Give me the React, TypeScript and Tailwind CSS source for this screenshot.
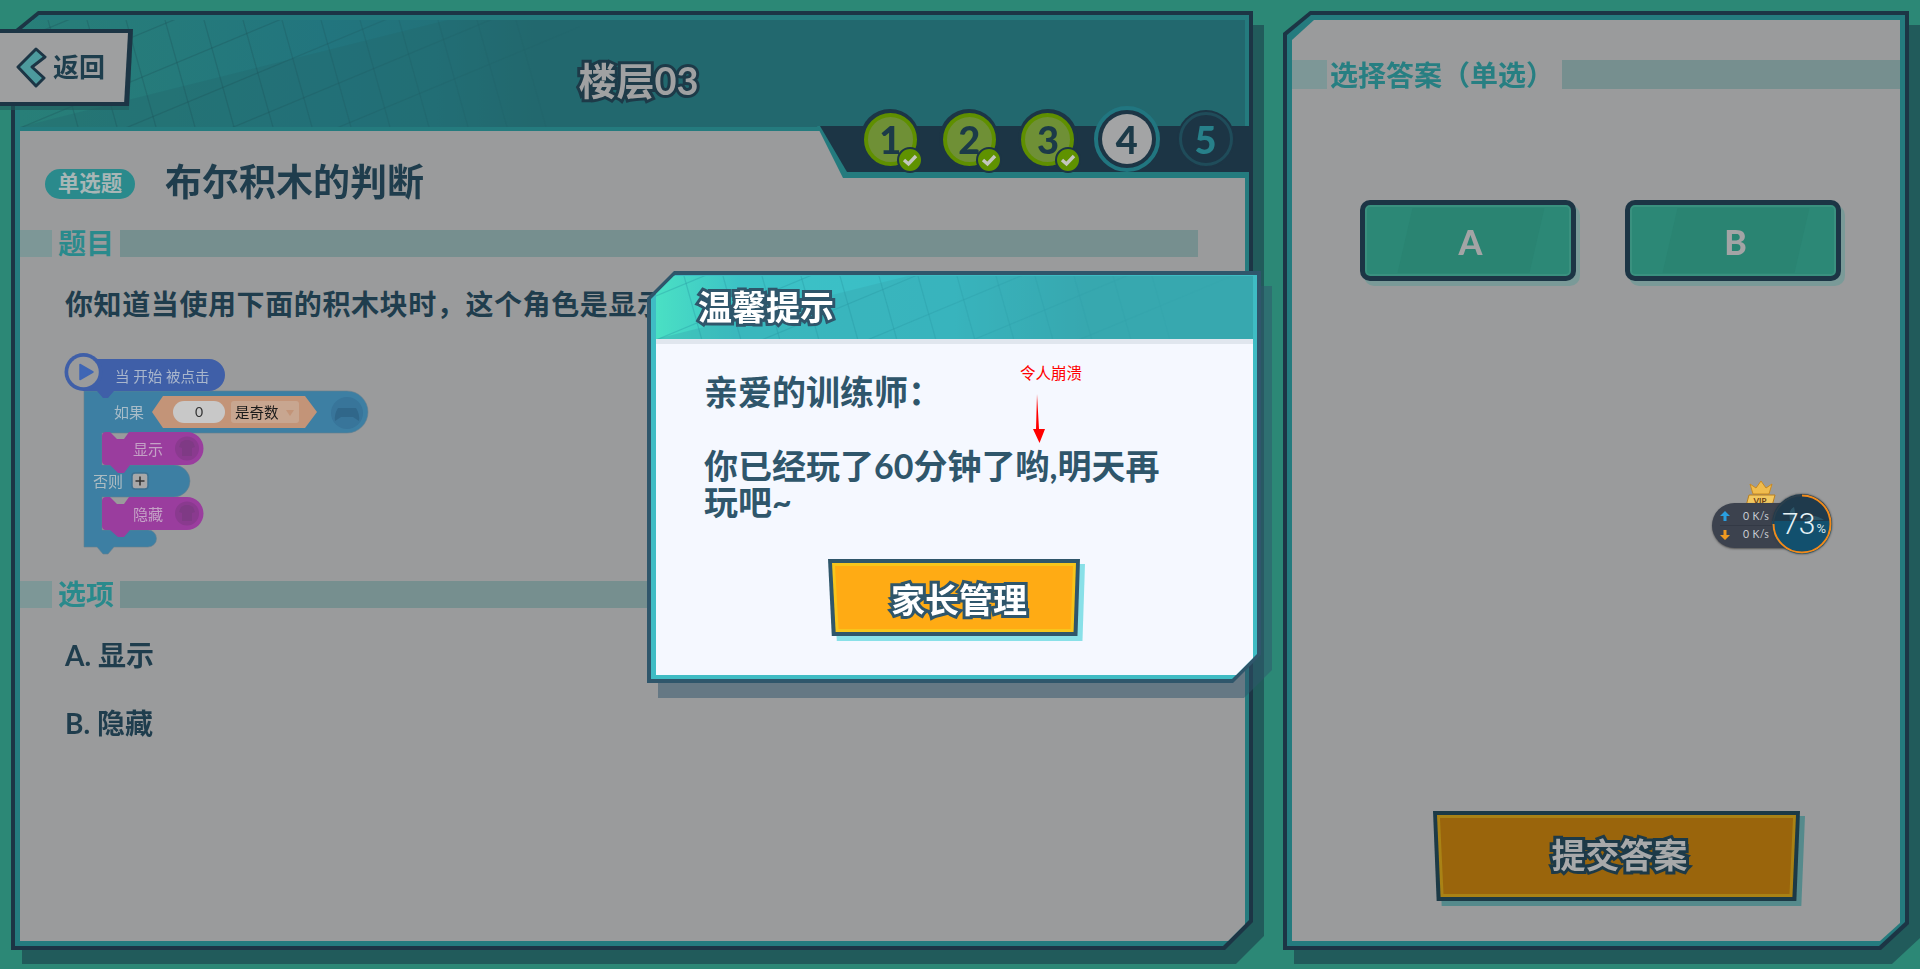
import React from 'react';

const STROKE_DARK = '[-webkit-text-stroke:6px_#1d3a48] [paint-order:stroke_fill]';
const STROKE_MODAL = '[-webkit-text-stroke:6px_#2f566b] [paint-order:stroke_fill]';

const GridLines: React.FC<{ width: number; height: number; color: string; fill: string }> = ({ width, height, color, fill }) => {
  const verticals = [0, 1, 2, 3, 4, 5, 6, 7, 8, 9, 10, 11, 12];
  const risers = [0, 1, 2, 3, 4, 5];
  return (
    <svg width={width} height={height} className="absolute left-0 top-0" fill="none">
      <polygon points={`0,${height} ${height * 4},0 ${width},0 ${width},${height}`} fill={fill} />
      <g className="[mask-image:linear-gradient(90deg,#000_35%,transparent_100%)]">
        {verticals.map((i) => (
          <line key={i} x1={28 + i * 39} y1={0} x2={28 + i * 39 + height * 0.28} y2={height} stroke={color} strokeWidth={1.2} />
        ))}
        {risers.map((i) => (
          <line key={i} x1={0} y1={20 + i * 44} x2={600} y2={20 + i * 44 - 250} stroke={color} strokeWidth={1.2} />
        ))}
      </g>
    </svg>
  );
};

const Band: React.FC<{ title: string; width: string }> = ({ title, width }) => (
  <div className={`flex h-[27px] shrink-0 items-center ${width}`}>
    <div className="h-full w-[32px] bg-[#7d9797]" />
    <div className="w-[68px] pb-[2px] pl-[6px] text-[28px] font-bold leading-none text-[#2a8a8c]">{title}</div>
    <div className="h-full flex-1 bg-[#768f8f]" />
  </div>
);

const Step: React.FC<{ n: number; state: 'done' | 'current' | 'todo' }> = ({ n, state }) => (
  <div className="relative flex h-[66px] w-[78.8px] shrink-0 items-center justify-center">
    {state === 'done' && (
      <div className="flex h-[60px] w-[60px] items-center justify-center rounded-full bg-[#1c3545]">
        <div className="flex h-[53px] w-[53px] items-center justify-center rounded-full border-[4px] border-[#5f8f00] bg-[#6f9036] text-[38px] font-black text-[#1c3a48]">
          {n}
        </div>
        <div className="absolute left-[46px] top-[41px] flex h-[26px] w-[26px] items-center justify-center rounded-full border-2 border-[#1c3545] bg-[#5f9200]">
          <svg width="18" height="14" viewBox="0 0 18 14" fill="none">
            <path d="M3 7 L7.5 11 L15 3" stroke="#c3c6bd" strokeWidth="3.4" />
          </svg>
        </div>
      </div>
    )}
    {state === 'current' && (
      <div className="flex h-[66px] w-[66px] items-center justify-center rounded-full border-[4px] border-[#217680] bg-[#1c3545]">
        <div className="flex h-[50px] w-[50px] items-center justify-center rounded-full bg-[#a3a4a5] text-[38px] font-black text-[#1c3a48]">
          {n}
        </div>
      </div>
    )}
    {state === 'todo' && (
      <div className="flex h-[58px] w-[58px] items-center justify-center rounded-full bg-[#1c3545]">
        <div className="flex h-[54px] w-[54px] items-center justify-center rounded-full border-[3px] border-[#1f4c5a] text-[38px] font-black text-[#27808a]">
          {n}
        </div>
      </div>
    )}
  </div>
);

const BlockCode: React.FC = () => (
  <svg width="360" height="240" className="ml-[20px] mt-[7px] block shrink-0" viewBox="0 0 360 240">
    <path
      d="M44 61 H307 A21 21 0 0 1 307 103 H62 V135 H134 A16 16 0 0 1 134 167 H62 V200 H108 A8.5 8.5 0 0 1 108 217 H74 L68 224 H63 L57 217 H44 Z"
      fill="#3d7fa3"
      stroke="#66808f"
      strokeWidth="0.6"
    />
    <path d="M43 29 H169 A16 16 0 0 1 169 61 H74 L68 68 H63 L57 61 H43 Z" fill="#3f5fa8" />
    <circle cx="43.5" cy="42" r="19" fill="#3f5fa8" />
    <circle cx="43.5" cy="42" r="15.3" fill="#9a9b9c" />
    <path d="M40 34.5 L53 42 L40 49.5 Z" fill="#3f66b5" stroke="#3f66b5" strokeWidth="1.5" strokeLinejoin="round" />
    <text x="75" y="52" fontSize="14.5" fill="#a9b6cc">当 开始 被点击</text>

    <text x="74" y="88" fontSize="15" fill="#a8bcc8">如果</text>
    <polygon points="112,82 123,66 265,66 277,82 265,98 123,98" fill="#c39478" />
    <rect x="133" y="71" width="52" height="22" rx="11" fill="#c8c8c8" />
    <text x="159" y="87" fontSize="14" fill="#333" textAnchor="middle">0</text>
    <rect x="191" y="71" width="68" height="22" rx="3" fill="#c8a690" />
    <text x="195" y="88" fontSize="14.5" fill="#1a1a1a">是奇数</text>
    <polygon points="246,80 254,80 250,86" fill="#c39478" />
    <circle cx="307" cy="83" r="16" fill="#38759a" />
    <path d="M298 78 H316 Q320 84 319 91 L313 87 H301 L295 91 Q294 84 298 78 Z" fill="#30678a" />

    <path d="M62 106 A4 4 0 0 1 66 102 H70 L77 109 H84 L89 102 H147 A16.5 16.5 0 0 1 147 135 H90 L84 143 H78 L70 135 H66 A4 4 0 0 1 62 131 Z" fill="#9a3d9e" />
    <circle cx="147" cy="118.5" r="12" fill="#8a3a8f" />
    <path d="M141 112 L145 110 H149 L153 112 L155 117 L152 118 V126 H142 V118 L139 117 Z" fill="#7f3a85" />
    <text x="93" y="125" fontSize="15" fill="#c4a2c6">显示</text>

    <text x="53" y="157" fontSize="15" fill="#adbcc2">否则</text>
    <rect x="92" y="143" width="16" height="16" rx="3" fill="#a8a8a8" stroke="#3c7090" strokeWidth="1.5" />
    <path d="M100 146.5 V155.5 M95.5 151 H104.5" stroke="#333" strokeWidth="1.6" />

    <path d="M62 171 A4 4 0 0 1 66 167 H70 L77 174 H84 L89 167 H147 A16.5 16.5 0 0 1 147 200 H90 L84 207 H78 L70 200 H66 A4 4 0 0 1 62 196 Z" fill="#9a3d9e" />
    <circle cx="147" cy="183.5" r="12" fill="#8a3a8f" />
    <path d="M141 177 L145 175 H149 L153 177 L155 182 L152 183 V191 H142 V183 L139 182 Z" fill="#7f3a85" />
    <text x="93" y="190" fontSize="15" fill="#c4a2c6">隐藏</text>
  </svg>
);

const LeftPanel: React.FC = () => (
  <div className="relative h-[939px] w-[1242px] shrink-0">
    <div className="h-full w-full [filter:drop-shadow(11px_14px_0_#215b5b)]">
      <div className="h-full w-full bg-[#1c3545] p-[4px] [clip-path:polygon(27px_0,100%_0,100%_calc(100%-28px),calc(100%-28px)_100%,0_100%,0_22px)]">
        <div className="flex h-full w-full flex-col gap-[4px] bg-[#247b7e] pb-[5px] pl-[5px] pr-[4px] pt-[5px] [clip-path:polygon(24px_0,100%_0,100%_calc(100%-26px),calc(100%-26px)_100%,0_100%,0_20px)]">
          <div className="relative flex h-[107px] shrink-0 justify-center overflow-hidden bg-[linear-gradient(90deg,#287f78_0%,#22757e_25%,#22727a_34%,#22686e_42%)]">
            <GridLines width={560} height={107} color="rgba(30,80,85,0.3)" fill="rgba(34,104,110,0.4)" />
            <div className={`relative pl-[12px] pt-[40px] text-[38px] font-bold leading-[40px] text-[#a0a1a2] ${STROKE_DARK}`}>楼层03</div>
          </div>
          <div className="flex min-h-0 flex-1 flex-col bg-[#9a9b9c]">
            <div className="flex items-center pl-[25px] pt-[38px]">
              <div className="flex h-[30px] w-[90px] items-center justify-center rounded-full bg-[#2a8a8c] text-[21.5px] font-bold leading-none text-[#a8b6b6]">
                单选题
              </div>
              <div className="ml-[30px] -translate-y-[2px] text-[37px] font-bold leading-[30px] text-[#1f3d4d]">布尔积木的判断</div>
            </div>
            <div className="mt-[31px]">
              <Band title="题目" width="w-[1178px]" />
            </div>
            <div className="ml-[45px] mt-[28px] whitespace-nowrap text-[28px] font-bold leading-[38px] tracking-[0.6px] text-[#1f3d4d]">
              你知道当使用下面的积木块时，这个角色是显示
            </div>
            <BlockCode />
            <div className="mt-[11px]">
              <Band title="选项" width="w-[1178px]" />
            </div>
            <div className="ml-[45px] mt-[28px] text-[28px] font-bold leading-[38px] text-[#1f3d4d]">A. 显示</div>
            <div className="ml-[45px] mt-[30px] text-[28px] font-bold leading-[38px] text-[#1f3d4d]">B. 隐藏</div>
          </div>
        </div>
      </div>
    </div>

    {/* back button sits over the panel corner */}
    <div className="absolute left-[-11px] top-[18px] w-[133px] [filter:drop-shadow(0_4px_0_rgba(33,91,91,0.6))]">
      <div className="h-[77px] bg-[#1c3545] pb-[4px] pr-[5px] pt-[4px] [clip-path:polygon(0_0,100%_0,97%_100%,0_100%)]">
        <div className="flex h-full items-center bg-[#9e9fa0] pl-[15px] [clip-path:polygon(0_0,100%_0,97%_100%,0_100%)]">
          <svg width="32" height="42" viewBox="0 0 32 42" fill="none">
            <path d="M21 2 L3 20 L21 39 L29 31 L17 20 L30 10 Z" fill="#4d9a9d" stroke="#1c3545" strokeWidth="3" strokeLinejoin="round" />
          </svg>
          <span className="ml-[6px] pb-[2px] text-[26px] font-bold leading-none text-[#1e3e4d]">返回</span>
        </div>
      </div>
    </div>

    {/* step strip hangs over the panel's lower edge */}
    <div className="absolute left-[803px] top-[95px] h-[72px] w-[435px]">
      <div className="absolute bottom-0 left-0 h-[52px] w-full bg-[#247b7e] [clip-path:polygon(3px_0,100%_0,100%_100%,29px_100%)]" />
      <div className="absolute bottom-[6px] left-0 h-[46px] w-full bg-[#1c3545] [clip-path:polygon(6px_0,100%_0,100%_100%,33px_100%)]" />
      <div className="relative flex h-[66px] items-center pl-[37px]">
        <Step n={1} state="done" />
        <Step n={2} state="done" />
        <Step n={3} state="done" />
        <Step n={4} state="current" />
        <Step n={5} state="todo" />
      </div>
    </div>
  </div>
);

const AnswerButton: React.FC<{ label: string }> = ({ label }) => (
  <div className="relative flex h-[81px] w-[216px] items-center justify-center overflow-hidden rounded-[10px] border-[5px] border-[#1c3545] bg-[#2c8876] shadow-[inset_0_0_0_2px_#3a917f]">
    <div className="absolute inset-y-[3px] left-[40px] w-[132px] skew-x-[-13deg] bg-[#2a8472]" />
    <span className="relative pl-[5px] pt-[3px] text-[34px] font-black leading-none text-[#a3a4a5]">{label}</span>
  </div>
);

const RightPanel: React.FC = () => (
  <div className="ml-[30px] h-[939px] w-[626px] shrink-0 [filter:drop-shadow(11px_14px_0_#215b5b)]">
    <div className="h-full w-full bg-[#1c3545] p-[4px] [clip-path:polygon(27px_0,100%_0,100%_calc(100%-26px),calc(100%-28px)_100%,0_100%,0_22px)]">
      <div className="h-full w-full bg-[#247b7e] pb-[5px] pl-[5px] pr-[5px] pt-[5px] [clip-path:polygon(24px_0,100%_0,100%_calc(100%-24px),calc(100%-26px)_100%,0_100%,0_20px)]">
        <div className="flex h-full w-full flex-col bg-[#9a9b9c] pt-[40px] [clip-path:polygon(22px_0,100%_0,100%_calc(100%-18px),calc(100%-20px)_100%,0_100%,0_20px)]">
          <div className="flex h-[29px] shrink-0 items-center">
            <div className="h-full w-[35px] bg-[#7d9797]" />
            <div className="whitespace-nowrap pb-[1px] pl-[3px] pr-[8px] text-[28px] font-bold leading-none text-[#277f82]">
              选择答案
              <span className="font-['Noto_Sans_CJK_TC',sans-serif]">（</span>
              单选
              <span className="font-['Noto_Sans_CJK_TC',sans-serif]">）</span>
            </div>
            <div className="h-full flex-1 bg-[#768f8f]" />
          </div>
          <div className="ml-[68px] mt-[111px] flex gap-[49px]">
            <div className="[filter:drop-shadow(4px_5px_0_#7a9a98)]">
              <AnswerButton label="A" />
            </div>
            <div className="[filter:drop-shadow(4px_5px_0_#7a9a98)]">
              <AnswerButton label="B" />
            </div>
          </div>
          <div className="mb-[40px] ml-[141px] mt-auto w-[367px] [filter:drop-shadow(5px_5px_0_#558a8c)]">
            <div className="h-[90px] bg-[#1c3a46] p-[4px] [clip-path:polygon(0_0,100%_0,99%_100%,1%_100%)]">
              <div className="h-full bg-[#a98215] p-[3px] [clip-path:polygon(0_0,100%_0,99%_100%,1%_100%)]">
                <div className={`flex h-full items-center justify-center bg-[#9a650c] pb-[2px] pl-[6px] text-[34px] font-bold leading-none text-[#a8a9aa] [clip-path:polygon(0_0,100%_0,99%_100%,1%_100%)] ${STROKE_DARK}`}>
                  提交答案
                </div>
              </div>
            </div>
          </div>
        </div>
      </div>
    </div>
  </div>
);

const Modal: React.FC = () => (
  <div className="absolute left-[647px] top-[271px] h-[412px] w-[614px] [filter:drop-shadow(11px_15px_0_rgba(47,86,107,0.5))]">
    <div className="h-full w-full bg-[#2f566b] p-[4px] [clip-path:polygon(27px_0,100%_0,100%_calc(100%-28px),calc(100%-28px)_100%,0_100%,0_27px)]">
      <div className="flex h-full w-full flex-col bg-[#3fbcc4] pb-[4px] pl-[5px] pr-[4px] pt-[1px] [clip-path:polygon(24px_0,100%_0,100%_calc(100%-25px),calc(100%-25px)_100%,0_100%,0_24px)]">
        <div className="relative flex h-[63px] shrink-0 items-center overflow-hidden bg-[linear-gradient(90deg,#4ae0c4_0%,#3cc2c6_14%,#3abcc6_50%,#37a8b0_72%)] pl-[42px]">
          <GridLines width={600} height={63} color="rgba(40,150,160,0.35)" fill="rgba(55,168,176,0.4)" />
          <div className={`relative pb-[2px] text-[34px] font-bold leading-none text-white ${STROKE_MODAL}`}>温馨提示</div>
        </div>
        <div className="h-[5px] shrink-0 bg-[#e0e6ee]" />
        <div className="relative flex min-h-0 flex-1 flex-col bg-[#f5f8ff] pl-[48px]">
          <div className="pt-[30px] text-[34px] font-bold leading-[36px] text-[#2f566b]">亲爱的训练师：</div>
          <div className="mt-[38px] w-[470px] text-[34px] font-bold leading-[36px] text-[#2f566b]">你已经玩了60分钟了哟,明天再玩吧~</div>
          <div className="ml-[124px] mt-[39px] w-[252px] [filter:drop-shadow(5px_5px_0_#89e0e8)]">
            <div className="h-[77px] bg-[#2f566b] p-[4px] [clip-path:polygon(0_0,100%_0,99%_100%,1.5%_100%)]">
              <div className="h-full bg-[#f7c51c] p-[3px] [clip-path:polygon(0_0,100%_0,99%_100%,1.5%_100%)]">
                <div className={`flex h-full items-center justify-center bg-[#ffab14] pl-[10px] pt-[4px] text-[34px] font-bold leading-none text-white [clip-path:polygon(0_0,100%_0,99%_100%,1.5%_100%)] ${STROKE_MODAL}`}>
                  家长管理
                </div>
              </div>
            </div>
          </div>
          {/* hand-drawn annotation on top of the screenshot */}
          <div className="absolute left-[364px] top-[22px] text-[15.5px] leading-none text-[#ff0000]">令人崩溃</div>
          <svg width="16" height="52" className="absolute left-[375px] top-[49px]" viewBox="0 0 16 52">
            <polygon points="6,1 8,36 14,36 8.5,50 2,36 5,36" fill="#ff0000" />
          </svg>
        </div>
      </div>
    </div>
  </div>
);

const SpeedWidget: React.FC = () => (
  <div className="absolute left-[1712px] top-[480px] h-[100px] w-[122px]">
    <svg width="34" height="30" viewBox="0 0 34 30" className="absolute left-[32px] top-0">
      <path d="M9 14 L6 4 L12 8 L17 1 L22 8 L28 4 L25 14 Z" fill="#f0bc4e" stroke="#c98a22" strokeWidth="1" />
      <path d="M5 15 H31 L28 26 H2 Z" fill="#f2c860" stroke="#b97f20" strokeWidth="1" />
      <text x="16" y="24" fontSize="8" fontWeight="700" textAnchor="middle" fill="#6b3b12">VIP</text>
    </svg>
    <div className="absolute left-0 top-[23px] flex h-[45px] w-[85px] flex-col justify-center rounded-l-full bg-[#3c424e] pl-[8px] text-[10.5px] leading-none text-[#c8ccd2] shadow-[0_1px_2px_#555]">
      <div className="flex h-[18px] items-center border-b border-[#333945]">
        <svg width="10" height="10" viewBox="0 0 10 10"><path d="M5 0 L10 5 H6.5 V10 H3.5 V5 H0 Z" fill="#2a9fe0" /></svg>
        <span className="ml-[13px] tracking-[0.3px]">0 K/s</span>
      </div>
      <div className="flex h-[18px] items-center">
        <svg width="10" height="10" viewBox="0 0 10 10"><path d="M5 10 L10 5 H6.5 V0 H3.5 V5 H0 Z" fill="#f09a20" /></svg>
        <span className="ml-[13px] tracking-[0.3px]">0 K/s</span>
      </div>
    </div>
    <div className="absolute left-[60px] top-[14px] flex h-[60px] w-[60px] items-center justify-center overflow-hidden rounded-full bg-[linear-gradient(180deg,#1f3a4c_0%,#1f3a4c_45%,#12506e_45%,#12506e_100%)] shadow-[0_0_2px_#333]">
      <svg width="60" height="60" viewBox="0 0 60 60" fill="none" className="absolute left-0 top-0">
        <circle cx="30" cy="30" r="28.5" stroke="#2c3f4c" strokeWidth="1.5" />
        <path d="M30 1.5 A28.5 28.5 0 1 1 1.5 30" stroke="#f08a1c" strokeWidth="2" />
        <path d="M18 26 Q16 16 22 13 Q24 20 22 26 Z M32 26 Q40 18 52 26 Z" fill="#2c5568" />
      </svg>
      <span className="relative pl-[4px] text-[30px] font-light leading-none text-[#e6f2f6] font-['Roboto',sans-serif]">73</span>
      <span className="relative ml-[1px] mt-[8px] text-[13px] leading-none text-[#d5e4ea] font-['Roboto',sans-serif]">%</span>
    </div>
  </div>
);

export default function App() {
  return (
    <div className="relative flex h-[969px] w-[1920px] items-start overflow-hidden bg-[#2c8876] pl-[11px] pt-[11px] font-['Lato','Noto_Sans_CJK_SC',sans-serif]">
      <LeftPanel />
      <RightPanel />
      <Modal />
      <SpeedWidget />
    </div>
  );
}
